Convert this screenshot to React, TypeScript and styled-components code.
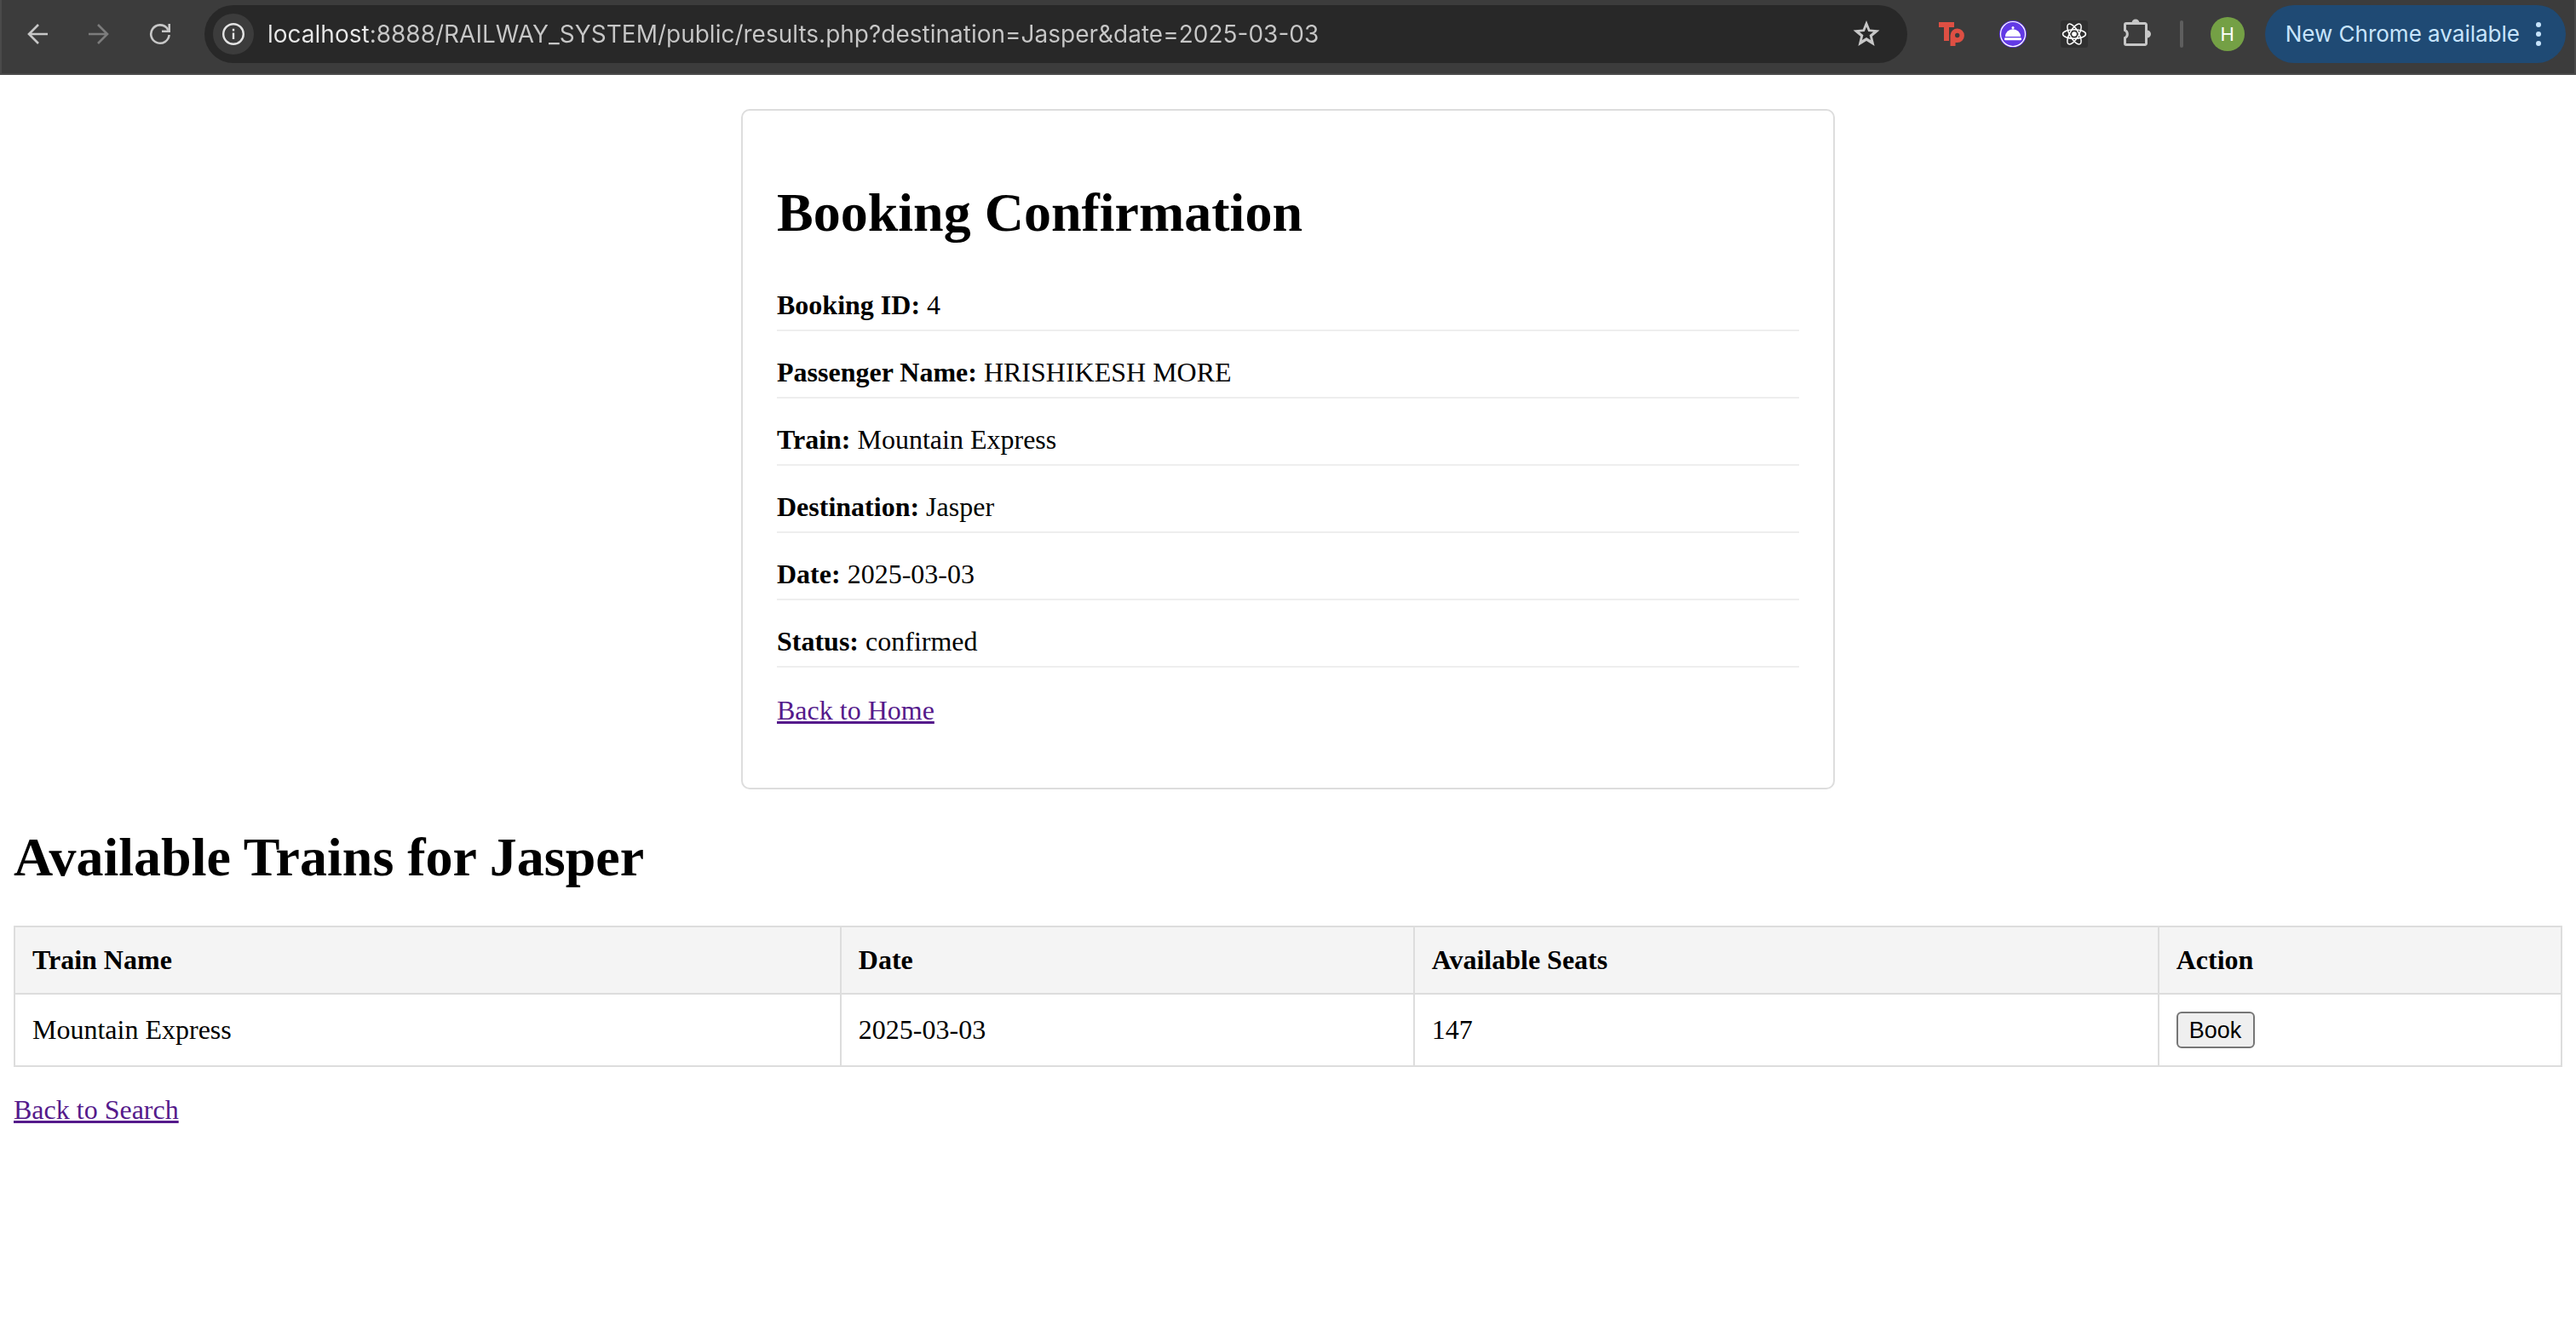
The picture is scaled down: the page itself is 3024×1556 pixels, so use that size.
import React from 'react';
import styled, { createGlobalStyle } from 'styled-components';

const GlobalStyle = createGlobalStyle`
  body {
    margin: 0;
    background: #fff;
    color: #000;
    font: 32px/37px "Liberation Serif", "Times New Roman", serif;
  }
  * { box-sizing: border-box; }
`;

const uiFont = 'Inter, Roboto, sans-serif';

const Toolbar = styled.header`
  display: flex;
  align-items: center;
  height: 88px;
  padding: 0 10px 6px 18px;
  background: #3c3c3c;
  border: 2px solid #4a4a4a;
  border-width: 0 2px 2px;
  font-family: ${uiFont};
`;

const NavGroup = styled.nav`
  display: flex;
  gap: 24px;
  margin-right: 28px;
`;

const IconButton = styled.button<{ $dim?: boolean }>`
  display: grid;
  place-items: center;
  width: 48px;
  height: 48px;
  padding: 0;
  border: 0;
  border-radius: 50%;
  background: none;
  color: ${(p) => (p.$dim ? '#7c7c7c' : '#c7c7c7')};
`;

const Omnibox = styled.form`
  flex: 1;
  display: flex;
  align-items: center;
  min-width: 0;
  height: 68px;
  padding: 0 24px 0 10px;
  border-radius: 34px;
  background: #282828;
`;

const SiteInfo = styled(IconButton)`
  background: #3c3c3c;
  color: #e3e3e3;
`;

const UrlInput = styled.input`
  flex: 1;
  min-width: 0;
  height: 40px;
  margin-left: 16px;
  padding: 0;
  border: 0;
  outline: 0;
  background: linear-gradient(90deg, #e8e8e8 0 120px, #c7c7c7 120px) text;
  color: transparent;
  font: 28px/40px ${uiFont};
`;

const Extensions = styled.div`
  display: flex;
  align-items: center;
  gap: 24px;
  margin: 0 28px;
`;

const Divider = styled.span`
  width: 4px;
  height: 32px;
  border-radius: 2px;
  background: #5e5e5e;
`;

const Avatar = styled.button`
  width: 40px;
  height: 40px;
  margin: 0 24px 0 32px;
  padding: 0;
  border: 0;
  border-radius: 50%;
  background: #74a045;
  color: #fff;
  font: 22px/40px ${uiFont};
`;

const UpdateButton = styled.button`
  display: flex;
  align-items: center;
  gap: 18px;
  height: 68px;
  padding: 0 28px 0 24px;
  border: 0;
  border-radius: 34px;
  background: #1f4a74;
  color: #c7e4fc;
  font: 26px/40px ${uiFont};
  white-space: nowrap;
`;

const Page = styled.main`
  padding: 40px 16px 16px;
`;

const Heading = styled.h1`
  margin: 43px 0;
  font-size: 64px;
  line-height: 74px;
`;

const Card = styled.section`
  display: flow-root;
  max-width: 1284px;
  margin: 0 auto;
  padding: 40px;
  border: 2px solid #ddd;
  border-radius: 10px;
`;

const Detail = styled.div`
  margin-bottom: 20px;
  padding: 10px 0;
  border-bottom: 2px solid #eee;
`;

const LinkLine = styled.p`
  margin: 32px 0;
`;

const VisitedLink = styled.a`
  color: #551a8b;
  text-decoration: underline 3px;
`;

const Table = styled.table`
  width: 100%;
  border-collapse: collapse;
`;

const HeadCell = styled.th`
  padding: 20px;
  border: 2px solid #ddd;
  background: #f4f4f4;
  text-align: left;
`;

const Cell = styled.td`
  padding: 20px;
  border: 2px solid #ddd;
`;

const BookButton = styled.button`
  display: block;
  height: 43px;
  padding: 0 14px 0 13px;
  border: 2px solid #767676;
  border-radius: 6px;
  background: #efefef;
  color: #000;
  font: 27px/36px "Liberation Sans", Arial, sans-serif;
`;

const details = [
  ['Booking ID', '4'],
  ['Passenger Name', 'HRISHIKESH MORE'],
  ['Train', 'Mountain Express'],
  ['Destination', 'Jasper'],
  ['Date', '2025-03-03'],
  ['Status', 'confirmed'],
];

const trains = [{ name: 'Mountain Express', date: '2025-03-03', seats: 147 }];

const BackIcon = () => (
  <svg width="24" height="24" viewBox="0 0 24 24" fill="none" stroke="currentColor" strokeWidth="2.6">
    <path d="M24 12H2M13 1 2 12l11 11" />
  </svg>
);

const ForwardIcon = () => (
  <svg width="24" height="24" viewBox="0 0 24 24" fill="none" stroke="currentColor" strokeWidth="2.6">
    <path d="M0 12h22M11 1l11 11-11 11" />
  </svg>
);

const ReloadIcon = () => (
  <svg width="26" height="26" viewBox="0 0 26 26" fill="none" stroke="currentColor" strokeWidth="2.6">
    <path d="M23.6 14A10.7 10.7 0 1 1 21 6l2 3" />
    <path d="M23.7 1v8.7H15" />
  </svg>
);

const InfoIcon = () => (
  <svg width="26" height="26" viewBox="0 0 26 26" fill="none" stroke="currentColor" strokeWidth="2.4">
    <circle cx="13" cy="13" r="11.8" />
    <path d="M13 11.5V19M13 6.8v2.6" />
  </svg>
);

const StarIcon = () => (
  <svg width="32" height="32" viewBox="0 0 32 32" fill="currentColor" fillRule="evenodd">
    <path d="M16 0l4.200 10.400L31.500 11.400l-8.600 7.300L25.600 30 16 24 6.400 30l2.700-11.300L.5 11.400l11.300-1zM16 7.500l-2.200 5.400-5.900.5 4.500 3.800L11 23l5-3.100L21 23l-1.400-5.800 4.500-3.800-5.900-.5z" />
  </svg>
);

const TpIcon = () => (
  <svg width="30" height="28" viewBox="0 0 30 28" fill="#de4f43" fillRule="evenodd">
    <path d="M0 0h18v6h-6v16H6V6H0z" />
    <path d="M13.500 28V15.500a8.200 8.200 0 1 1 8.200 8.500H19.500v4zM21.700 12.800a2.700 2.700 0 1 0 0 5.400 2.700 2.700 0 0 0 0-5.400z" />
  </svg>
);

const DishIcon = () => (
  <svg width="32" height="32" viewBox="0 0 32 32">
    <circle cx="16" cy="16" r="16" fill="#6239e6" />
    <circle cx="16" cy="16" r="14.5" fill="none" stroke="#fff" strokeWidth="1.2" />
    <g fill="#fff">
      <circle cx="16" cy="8.500" r="1.5" />
      <path d="M7 19a9 8.800 0 0 1 18 0z" />
      <rect x="6" y="20.300" width="20" height="3" rx="1.2" />
    </g>
  </svg>
);

const ReactIcon = () => (
  <svg width="32" height="32" viewBox="0 0 32 32" fill="none" stroke="#fff" strokeWidth="1.5">
    <rect width="32" height="32" rx="3" fill="#303030" stroke="none" />
    <circle cx="16" cy="16" r="2.8" fill="#fff" stroke="none" />
    <ellipse cx="16" cy="16" rx="13.500" ry="5.2" />
    <ellipse cx="16" cy="16" rx="13.500" ry="5.2" transform="rotate(60 16 16)" />
    <ellipse cx="16" cy="16" rx="13.500" ry="5.2" transform="rotate(120 16 16)" />
  </svg>
);

const PuzzleIcon = () => (
  <svg width="36" height="36" viewBox="-4 0 36 36">
    <path
      d="M3 5.500h22a1.500 1.500 0 0 1 1.500 1.500v22a1.500 1.500 0 0 1-1.500 1.500H3A1.500 1.500 0 0 1 1.500 29v-6.500a5 5 0 0 0 0-9V7A1.500 1.500 0 0 1 3 5.500z"
      fill="none"
      stroke="currentColor"
      strokeWidth="3"
    />
    <path d="M9.500 5a4.500 4.500 0 0 1 9 0zM27.500 13.500a4.500 4.500 0 0 1 0 9z" fill="currentColor" />
  </svg>
);

const DotsIcon = () => (
  <svg width="8" height="28" viewBox="0 0 8 28" fill="currentColor">
    <circle cx="4" cy="3" r="3" />
    <circle cx="4" cy="14" r="3" />
    <circle cx="4" cy="25" r="3" />
  </svg>
);

export default function App() {
  return (
    <>
      <GlobalStyle />
      <Toolbar>
        <NavGroup aria-label="Browser navigation">
          <IconButton aria-label="Back"><BackIcon /></IconButton>
          <IconButton aria-label="Forward" $dim><ForwardIcon /></IconButton>
          <IconButton aria-label="Reload"><ReloadIcon /></IconButton>
        </NavGroup>
        <Omnibox onSubmit={(e) => e.preventDefault()}>
          <SiteInfo type="button" aria-label="Site information"><InfoIcon /></SiteInfo>
          <UrlInput
            aria-label="Address"
            spellCheck={false}
            defaultValue="localhost:8888/RAILWAY_SYSTEM/public/results.php?destination=Jasper&date=2025-03-03"
          />
          <IconButton type="button" aria-label="Bookmark this page"><StarIcon /></IconButton>
        </Omnibox>
        <Extensions>
          <IconButton aria-label="Tp extension"><TpIcon /></IconButton>
          <IconButton aria-label="Dish extension"><DishIcon /></IconButton>
          <IconButton aria-label="React extension"><ReactIcon /></IconButton>
          <IconButton aria-label="Extensions"><PuzzleIcon /></IconButton>
        </Extensions>
        <Divider />
        <Avatar aria-label="Profile H">H</Avatar>
        <UpdateButton>
          New Chrome available
          <DotsIcon />
        </UpdateButton>
      </Toolbar>
      <Page>
        <Card>
          <Heading>Booking Confirmation</Heading>
          {details.map(([label, value]) => (
            <Detail key={label}>
              <strong>{label}:</strong> {value}
            </Detail>
          ))}
          <LinkLine><VisitedLink href="#home">Back to Home</VisitedLink></LinkLine>
        </Card>
        <Heading>Available Trains for Jasper</Heading>
        <Table>
          <thead>
            <tr>
              <HeadCell>Train Name</HeadCell>
              <HeadCell>Date</HeadCell>
              <HeadCell>Available Seats</HeadCell>
              <HeadCell>Action</HeadCell>
            </tr>
          </thead>
          <tbody>
            {trains.map((train) => (
              <tr key={train.name}>
                <Cell>{train.name}</Cell>
                <Cell>{train.date}</Cell>
                <Cell>{train.seats}</Cell>
                <Cell><BookButton>Book</BookButton></Cell>
              </tr>
            ))}
          </tbody>
        </Table>
        <LinkLine><VisitedLink href="#search">Back to Search</VisitedLink></LinkLine>
      </Page>
    </>
  );
}
